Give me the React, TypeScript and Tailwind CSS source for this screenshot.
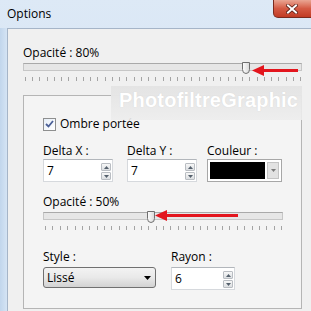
import React from "react";

interface SliderProps {
  width: number;
  thumbX: number;
  tickCount: number;
  arrowTip: number;
  arrowEnd: number;
  arrowY: number;
}

function Thumb() {
  return (
    <svg width="8" height="12" viewBox="0 0 8 12">
      <defs>
        <linearGradient id="thumbFill" x1="0" y1="0" x2="1" y2="0">
          <stop offset="0" stopColor="#ffffff" />
          <stop offset="1" stopColor="#d8d8d8" />
        </linearGradient>
      </defs>
      <path
        d="M0.5 0.5 H7.5 V7.5 Q7.5 11.5 4 11.5 Q0.5 11.5 0.5 7.5 Z"
        fill="url(#thumbFill)"
        stroke="#6f6f6f"
      />
    </svg>
  );
}

function RedArrow({ length }: { length: number }) {
  return (
    <svg width={length} height="11" viewBox={`0 0 ${length} 11`}>
      <path d="M0 5.5 L12 0 L12 11 Z" fill="#e3151d" />
      <rect x="10" y="4" width={length - 10} height="3" fill="#e3151d" />
    </svg>
  );
}

function Slider({ width, thumbX, tickCount, arrowTip, arrowEnd, arrowY }: SliderProps) {
  const step = (width - 4) / (tickCount - 1);
  return (
    <div className="relative h-[22px]" style={{ width }}>
      <div className="absolute left-0 right-0 top-[2px] h-[8px] border border-[#c6c6c6] border-t-[#a9a9a9] bg-[#e6e6e6]" />
      <svg className="absolute left-0 top-[16px]" width={width} height="4">
        {Array.from({ length: tickCount }).map((_, i) => (
          <rect key={i} x={Math.round(2 + i * step)} y="0" width="1" height="4" fill="#a4a4a4" />
        ))}
      </svg>
      <div className="absolute top-[1px]" style={{ left: thumbX }}>
        <Thumb />
      </div>
      <div className="absolute" style={{ left: arrowTip, top: arrowY - 5.5 }}>
        <RedArrow length={arrowEnd - arrowTip} />
      </div>
    </div>
  );
}

function SpinButton({ up }: { up?: boolean }) {
  return (
    <div className="flex h-[8px] w-[10px] items-center justify-center rounded-[1px] border border-[#b9bdc2] bg-gradient-to-b from-[#f7f7f7] to-[#dcdfe2]">
      <svg width="5" height="3" viewBox="0 0 5 3">
        <path d={up ? "M0 3 L2.5 0 L5 3 Z" : "M0 0 L2.5 3 L5 0 Z"} fill="#55606c" />
      </svg>
    </div>
  );
}

function SpinBox({ value, className }: { value: string; className: string }) {
  return (
    <div
      className={`flex h-[23px] items-center justify-between border border-[#d6d9dd] border-t-[#b2b6bb] bg-white pl-[3px] pr-[1px] ${className}`}
    >
      <span className="leading-[16px]">{value}</span>
      <div className="mt-[2px] flex flex-col gap-[1px]">
        <SpinButton up />
        <SpinButton />
      </div>
    </div>
  );
}

function ColorPicker() {
  return (
    <div className="flex h-[23px] w-[75px] items-center gap-[2px] border border-[#a7a7a7] bg-white p-[2px]">
      <div className="h-full w-[55px] bg-black" />
      <div className="flex h-full flex-1 items-center justify-center border border-[#c4c4c4] bg-[#e2e2e2]">
        <svg width="5" height="3" viewBox="0 0 5 3">
          <path d="M0 0 L2.5 3 L5 0 Z" fill="#7a7a7a" />
        </svg>
      </div>
    </div>
  );
}

function Combo({ value }: { value: string }) {
  return (
    <div className="flex h-[21px] w-[113px] items-center justify-between rounded-[3px] border border-[#707070] bg-gradient-to-b from-[#f3f3f3] via-[#e9e9e9] to-[#d2d2d2] pl-[3px] pr-[4px]">
      <span className="leading-[16px]">{value}</span>
      <svg width="7" height="4" viewBox="0 0 7 4">
        <path d="M0 0 L3.5 4 L7 0 Z" fill="#000000" />
      </svg>
    </div>
  );
}

function CloseButton() {
  return (
    <div className="absolute right-[-6px] top-0 flex h-[18px] w-[44px] items-center justify-center rounded-bl-[5px] border border-t-0 border-[#7a2a1e] bg-gradient-to-b from-[#e9a593] via-[#d45a44] to-[#c13b24] pr-[6px]">
      <svg width="12" height="10" viewBox="0 0 12 10">
        <path d="M2 1.5 L10 8.5 M10 1.5 L2 8.5" stroke="#5b1e15" strokeWidth="3.6" strokeLinecap="square" />
        <path d="M2 1.5 L10 8.5 M10 1.5 L2 8.5" stroke="#ffffff" strokeWidth="2" strokeLinecap="square" />
      </svg>
    </div>
  );
}

export default function App() {
  return (
    <div className="relative flex h-[311px] w-[311px] flex-col overflow-hidden bg-gradient-to-b from-[#dde9f6] to-[#cadcf0] font-['Open_Sans',sans-serif] text-[12px] text-black">
      {/* title bar */}
      <div className="h-[28px] shrink-0 pl-[7px] pt-[6px] leading-[16px]">Options</div>
      <CloseButton />

      <div className="flex flex-1">
        <div className="w-[7px] shrink-0 bg-gradient-to-r from-[#c2d6ec] to-[#d5e4f4]" />
        <div className="flex-1 border-l border-t border-[#a6b5c8] bg-[#f0f0f0] pl-[15px] pr-[9px] pt-[16px]">
          <div className="leading-[16px]">Opacité : 80%</div>
          <Slider width={279} thumbX={219} tickCount={39} arrowTip={229} arrowEnd={275} arrowY={9} />

          <div className="relative mt-[12px] border border-[#b5b5b5] bg-[#f4f4f4] pb-[18px] pl-[19px] pr-[18px] pt-[20px]">
            <div className="flex h-[16px] items-center gap-[4px]">
              <div className="flex h-[13px] w-[13px] items-center justify-center border border-[#8e8f8f] bg-gradient-to-br from-[#e6eef7] to-[#ffffff]">
                <svg width="9" height="8" viewBox="0 0 9 8">
                  <path d="M1 4 L3.5 6.5 L8 1" stroke="#4a5f97" strokeWidth="1.8" fill="none" />
                </svg>
              </div>
              <span className="leading-[16px]">Ombre portée</span>
            </div>

            <div className="mt-[11px] flex gap-[14px]">
              <div className="flex flex-col">
                <span className="leading-[16px]">Delta X :</span>
                <SpinBox value="7" className="w-[70px]" />
              </div>
              <div className="flex flex-col">
                <span className="leading-[16px]">Delta Y :</span>
                <SpinBox value="7" className="w-[70px]" />
              </div>
              <div className="ml-[-4px] flex flex-col">
                <span className="leading-[16px]">Couleur :</span>
                <ColorPicker />
              </div>
            </div>

            <div className="mt-[12px] leading-[16px]">Opacité : 50%</div>
            <Slider width={240} thumbX={104} tickCount={33} arrowTip={112} arrowEnd={195} arrowY={5.5} />

            <div className="mt-[17px] flex gap-[15px]">
              <div className="flex flex-col gap-[2px]">
                <span className="leading-[16px]">Style :</span>
                <Combo value="Lissé" />
              </div>
              <div className="flex flex-col gap-[2px]">
                <span className="leading-[16px]">Rayon :</span>
                <SpinBox value="6" className="h-[21px] w-[64px]" />
              </div>
            </div>
          </div>
        </div>
      </div>

      {/* watermark */}
      <div className="absolute left-[111px] top-[86px] flex h-[34px] w-[191px] items-start bg-gradient-to-b from-[#e4e4e4] to-[#ededed]/90 pl-[8px] pt-[3px] font-['Liberation_Sans',sans-serif] text-[20px] font-bold leading-[22px] tracking-[0.2px] text-white [text-shadow:0_0_1px_#d0d0d0]">
        PhotofiltreGraphic
      </div>
    </div>
  );
}
